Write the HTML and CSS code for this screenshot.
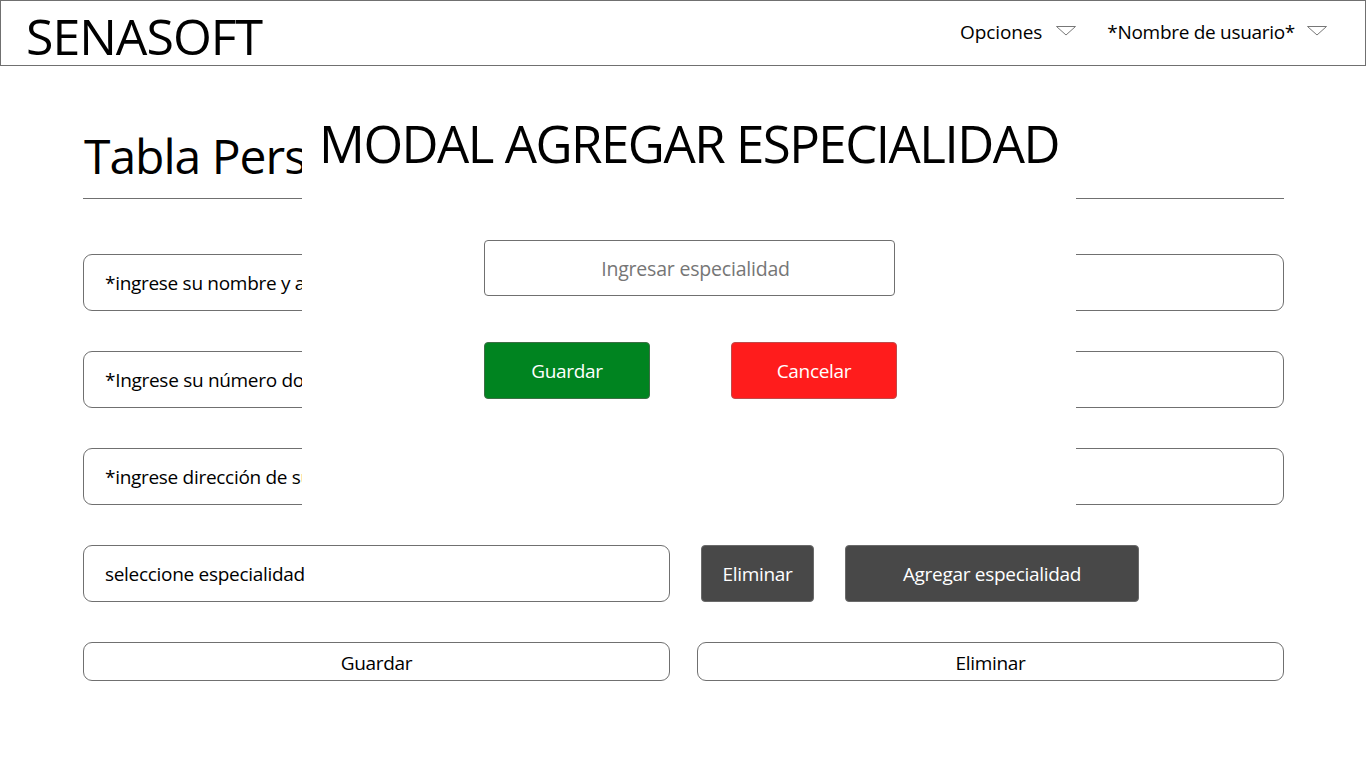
FILE: index.html
```html
<!DOCTYPE html>
<html lang="es">
<head>
<meta charset="utf-8">
<title>SENASOFT</title>
<link rel="stylesheet" href="styles.css">
</head>
<body>
<header class="topbar">
  <div class="brand">SENASOFT</div>
  <nav class="menu">
    <div class="menu-item">Opciones <svg class="caret" width="20" height="10" viewBox="0 0 20 10"><path d="M0.5 0.5 L10 9 L19.5 0.5 Z" fill="none" stroke="#777" stroke-width="1"/></svg></div>
    <div class="menu-item">*Nombre de usuario* <svg class="caret" width="20" height="10" viewBox="0 0 20 10"><path d="M0.5 0.5 L10 9 L19.5 0.5 Z" fill="none" stroke="#777" stroke-width="1"/></svg></div>
  </nav>
</header>

<main class="content">
  <h1 class="page-title">Tabla Personal</h1>
  <div class="field">*ingrese su nombre y apellido</div>
  <div class="field">*Ingrese su número documento</div>
  <div class="field">*ingrese dirección de su residencia</div>
  <div class="row">
    <div class="field field-half">seleccione especialidad</div>
    <button class="btn-dark btn-small">Eliminar</button>
    <button class="btn-dark btn-wide">Agregar especialidad</button>
  </div>
  <div class="actions">
    <button class="btn-outline">Guardar</button>
    <button class="btn-outline">Eliminar</button>
  </div>
</main>

<section class="modal">
  <h2 class="modal-title">MODAL AGREGAR ESPECIALIDAD</h2>
  <div class="modal-body">
    <div class="modal-input">Ingresar especialidad</div>
    <div class="modal-buttons">
      <button class="btn-green">Guardar</button>
      <button class="btn-red">Cancelar</button>
    </div>
  </div>
</section>
</body>
</html>
```

FILE: styles.css
```css
* { box-sizing: border-box; }
html, body { margin: 0; padding: 0; background: #fff; }
body {
  font-family: "Open Sans", "Noto Sans", sans-serif;
  color: #000;
  width: 1366px;
  height: 768px;
  position: relative;
  overflow: hidden;
}
.topbar {
  height: 66px;
  border: 1px solid #707070;
  display: flex;
  align-items: center;
  justify-content: space-between;
  padding: 0 38px 0 25px;
}
.brand {
  font-size: 50px;
  letter-spacing: -1px;
  line-height: 1;
  margin-top: 6px;
}
.menu { display: flex; gap: 31px; align-items: center; margin-top: -3px; }
.menu-item {
  font-size: 19px;
  display: flex;
  align-items: center;
  gap: 12px;
  letter-spacing: -0.3px;
}
.menu-item:first-child { gap: 14px; letter-spacing: -0.1px; }
.caret { display: block; margin-top: -1px; }

.content {
  padding: 0 82px 0 83px;
}
.page-title {
  margin: 0;
  font-weight: 400;
  font-size: 48px;
  letter-spacing: -1px;
  line-height: 1;
  padding: 66px 0 18px 1px;
  border-bottom: 1px solid #707070;
}
.field {
  height: 57px;
  border: 1px solid #707070;
  border-radius: 9px;
  display: flex;
  align-items: center;
  padding-left: 21px;
  font-size: 19px;
  letter-spacing: -0.3px;
  margin-top: 55px;
}
.field + .field { margin-top: 40px; }
.row {
  display: flex;
  margin-top: 40px;
  align-items: center;
}
.row .field { margin-top: 0; }
.field-half { width: 587px; }
.btn-dark {
  background: #484848;
  color: #fff;
  border: 1px solid #6a6a6a;
  border-radius: 4px;
  height: 57px;
  font-family: inherit;
  font-size: 19px;
  letter-spacing: -0.3px;
}
.btn-small { width: 113px; margin-left: 31px; }
.btn-wide { width: 294px; margin-left: 31px; }
.actions {
  display: flex;
  gap: 27px;
  margin-top: 40px;
}
.btn-outline {
  flex: 1;
  height: 39px;
  background: #fff;
  border: 1px solid #707070;
  border-radius: 9px;
  font-family: inherit;
  font-size: 19px;
  letter-spacing: -0.3px;
  color: #000;
  padding: 0;
  padding-top: 2px;
}

.modal {
  position: absolute;
  left: 302px;
  top: 100px;
  width: 774px;
  height: 406px;
  background: #fff;
}
.modal-title {
  margin: 0;
  text-align: center;
  font-weight: 400;
  font-size: 51px;
  letter-spacing: -1.5px;
  line-height: 1;
  padding-top: 18px;
}
.modal-body {
  padding: 0 0 0 182px;
  margin-top: 71px;
}
.modal-input {
  width: 411px;
  height: 56px;
  border: 1px solid #707070;
  border-radius: 4px;
  display: flex;
  align-items: center;
  justify-content: center;
  color: #767676;
  font-size: 19.5px;
  letter-spacing: -0.2px;
  padding-left: 12px;
}
.modal-buttons {
  display: flex;
  gap: 81px;
  margin-top: 46px;
}
.btn-green, .btn-red {
  width: 166px;
  height: 57px;
  border-radius: 4px;
  color: #fff;
  font-family: inherit;
  font-size: 19px;
  letter-spacing: -0.3px;
}
.btn-green { background: #008420; border: 1px solid #3d6e45; }
.btn-red { background: #ff1c1c; border: 1px solid #c04a4a; }
```
